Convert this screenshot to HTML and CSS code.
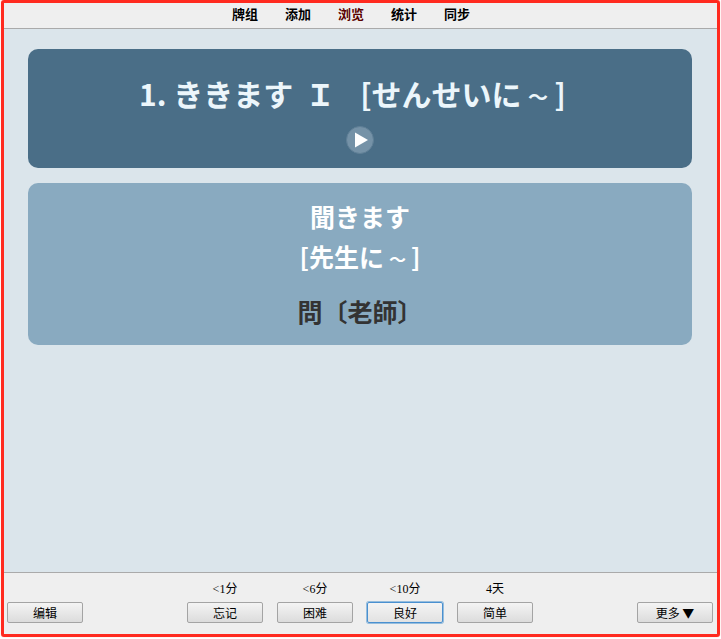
FILE: index.html
```html
<!DOCTYPE html>
<html lang="zh">
<head>
<meta charset="utf-8">
<title>Anki</title>
<link rel="stylesheet" href="styles.css">
</head>
<body>
<div class="frame">
  <nav class="topbar">
    <a class="link">牌组</a>
    <a class="link">添加</a>
    <a class="link active">浏览</a>
    <a class="link">统计</a>
    <a class="link">同步</a>
  </nav>
  <main class="content">
    <section class="card question">
      <div class="q-text" lang="ja">1. ききます <span class="roman">Ｉ</span>[せんせいに<span class="tilde">～</span>]</div>
      <div class="play-row">
        <svg class="play" width="28" height="28" viewBox="0 0 28 28">
          <circle cx="14" cy="14" r="13.5" fill="#7592a7"/>
          <circle cx="14" cy="14" r="13.5" fill="none" stroke="#5f7f96" stroke-width="1"/>
          <path d="M9 6.5 L22 14 L9 21.5 Z" fill="#fff"/>
        </svg>
      </div>
    </section>
    <section class="card answer">
      <div class="a-line" lang="ja">聞きます</div>
      <div class="a-line" lang="ja">[先生に<span class="tilde small">～</span>]</div>
      <div class="a-gloss" lang="zh-TW">問〔老師〕</div>
    </section>
  </main>
  <footer class="bottombar">
    <div class="side"><button class="btn">编辑</button></div>
    <div class="answers">
      <div class="ans"><span class="due">&lt;1分</span><button class="btn">忘记</button></div>
      <div class="ans"><span class="due">&lt;6分</span><button class="btn">困难</button></div>
      <div class="ans"><span class="due">&lt;10分</span><button class="btn focus">良好</button></div>
      <div class="ans"><span class="due">4天</span><button class="btn">简单</button></div>
    </div>
    <div class="side"><button class="btn">更多 ▼</button></div>
  </footer>
</div>
</body>
</html>
```
FILE: styles.css
```css
html, body {
  margin: 0;
  height: 100%;
}
body {
  background: #fff;
  padding: 0 1px 2px 1px;
  box-sizing: border-box;
  width: 721px;
  height: 639px;
  font-family: "Liberation Serif", "Noto Sans CJK SC", serif;
}
.frame {
  box-sizing: border-box;
  height: 637px;
  border: 3px solid #ff2a1f;
  border-radius: 3px;
  box-shadow: 0 0 1px #ff8a80;
  display: flex;
  flex-direction: column;
  overflow: hidden;
}
.topbar {
  height: 21px;
  padding: 0 19px 4px 0;
  flex: none;
  background: #efefef;
  border-bottom: 1px solid #aaa;
  display: flex;
  justify-content: center;
  align-items: center;
  gap: 27px;
  font-family: "Noto Sans CJK SC", sans-serif;
  font-size: 13px;
  font-weight: 700;
  color: #000;
}
.link.active {
  color: #5a0000;
}
.content {
  flex: 1;
  background: #dbe5eb;
  padding: 20px 25px 20px 24px;
  display: flex;
  flex-direction: column;
  gap: 15px;
}
.card {
  border-radius: 10px;
  text-align: center;
}
.question {
  height: 119px;
  background: #4a6e87;
  color: #ecf6fb;
}
.q-text {
  padding: 22px 15px 0 0;
  font-family: "Noto Sans CJK JP", sans-serif;
  font-size: 30px;
  line-height: 44px;
  font-weight: 700;
  white-space: pre;
}
.roman {
  margin: 0 25px 0 5px;
}
.tilde {
  display: inline-block;
  width: 33px;
  font-size: 20px;
  line-height: 1;
  vertical-align: 1px;
}
.tilde.small {
  width: 27px;
  font-size: 17px;
}
.play-row {
  display: flex;
  justify-content: center;
  padding-top: 11px;
}
.answer {
  height: 162px;
  background: #89aac0;
  padding-top: 13px;
  box-sizing: border-box;
  font-family: "Noto Sans CJK JP", sans-serif;
  font-weight: 700;
  font-size: 25px;
  color: #fff;
}
.a-line {
  line-height: 40px;
}
.a-gloss {
  margin-top: 15px;
  line-height: 40px;
  color: #333;
  font-family: "Noto Sans CJK TC", sans-serif;
}
.bottombar {
  flex: none;
  height: 50px;
  background: #efefef;
  border-top: 1px solid #aaa;
  padding: 0 4px 11px 3px;
  display: flex;
  justify-content: space-between;
  align-items: flex-end;
}
.answers {
  display: flex;
  gap: 14px;
}
.ans {
  display: flex;
  flex-direction: column;
  align-items: center;
}
.due {
  font-size: 12px;
  line-height: 16px;
  margin-bottom: 5px;
  color: #000;
}
.btn {
  width: 76px;
  height: 21px;
  padding: 0 0 1px;
  box-sizing: border-box;
  border: 1px solid #a4a4a4;
  border-radius: 2px;
  background: linear-gradient(#f4f4f4, #dcdcdc);
  font-family: "Noto Sans CJK SC", sans-serif;
  font-size: 12px;
  line-height: 17px;
  color: #000;
}
.btn.focus {
  border-color: #4a90d0;
  box-shadow: 0 0 0 1px rgba(90, 155, 209, 0.6);
  background: linear-gradient(#f4f4f4, #e2e2e2);
}
```
